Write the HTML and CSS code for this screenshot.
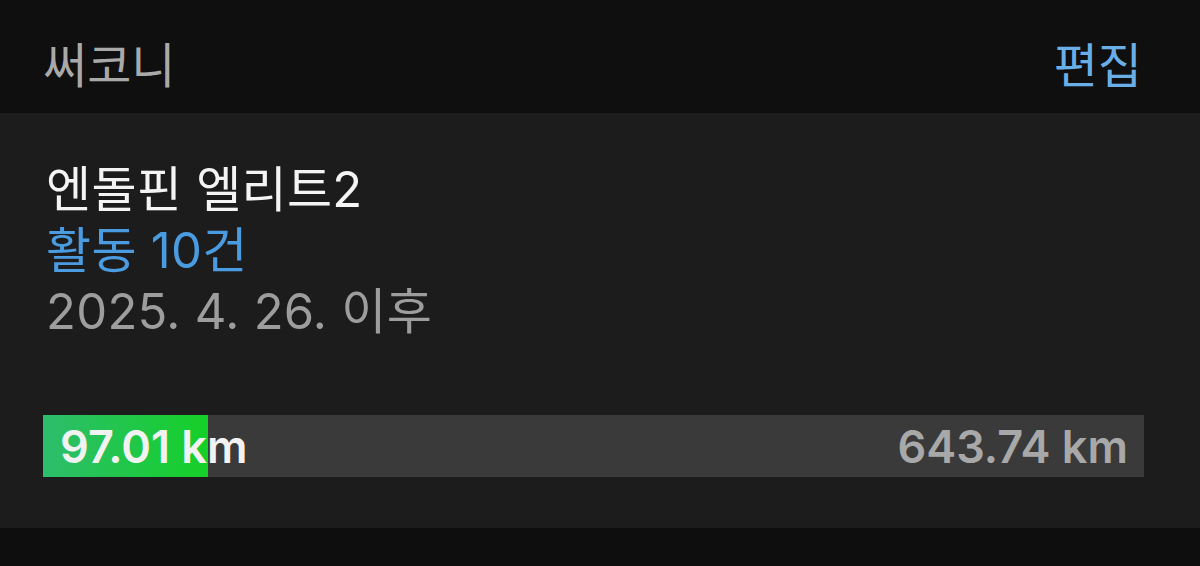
FILE: index.html
```html
<!DOCTYPE html>
<html lang="ko">

<head>
    <meta charset="UTF-8">
    <meta name="viewport" content="width=device-width, initial-scale=1.0">
    <title>써코니</title>
    <link rel="stylesheet" href="styles.css">
</head>

<body>
    <header class="top-bar">
        <span class="brand">써코니</span>
        <a class="edit" href="#">편집</a>
    </header>

    <section class="shoe-card">
        <div class="shoe-name">엔돌핀 엘리트2</div>
        <div class="shoe-count">활동 10건</div>
        <div class="shoe-since">2025. 4. 26. 이후</div>

        <div class="distance-bar">
            <div class="distance-fill" style="width: 15%"></div>
            <span class="distance-now">97.01 km</span>
            <span class="distance-max">643.74 km</span>
        </div>
    </section>
</body>

</html>
```

FILE: styles.css
```css
body {
    margin: 0;
    height: 566px;
    background-color: #0e0e0e;
    font-family: Inter, "Noto Sans CJK KR", sans-serif;
    overflow: hidden;
}

.top-bar {
    height: 113px;
    box-sizing: border-box;
    display: flex;
    justify-content: space-between;
    align-items: center;
    padding: 10px 58px 0 43px;
    background-color: #0f0f0f;
}

.brand {
    font-size: 48px;
    color: #a9a9a9;
}

.edit {
    font-size: 48px;
    color: #6aaee8;
    text-decoration: none;
}

.shoe-card {
    background-color: #1c1c1d;
    padding: 46px 56px 51px 43px;
}

.shoe-name,
.shoe-count,
.shoe-since {
    font-size: 49px;
    line-height: 61px;
    padding-left: 3px;
    letter-spacing: 0.3px;
}

.shoe-name {
    color: #f4f4f4;
}

.shoe-count {
    color: #4a9be0;
}

.shoe-since {
    color: #9d9d9d;
}

.distance-bar {
    position: relative;
    margin-top: 73px;
    height: 62px;
    display: flex;
    justify-content: space-between;
    align-items: center;
    padding: 0 16px 0 17px;
    background-color: #3a3a3a;
    font-size: 45px;
    font-weight: 600;
}

.distance-fill {
    position: absolute;
    left: 0;
    top: 0;
    bottom: 0;
    background: linear-gradient(to right, #2dbd6c, #15d028);
}

.distance-now {
    position: relative;
    color: #f2f2f2;
}

.distance-max {
    position: relative;
    color: #a8a8a8;
}
```
